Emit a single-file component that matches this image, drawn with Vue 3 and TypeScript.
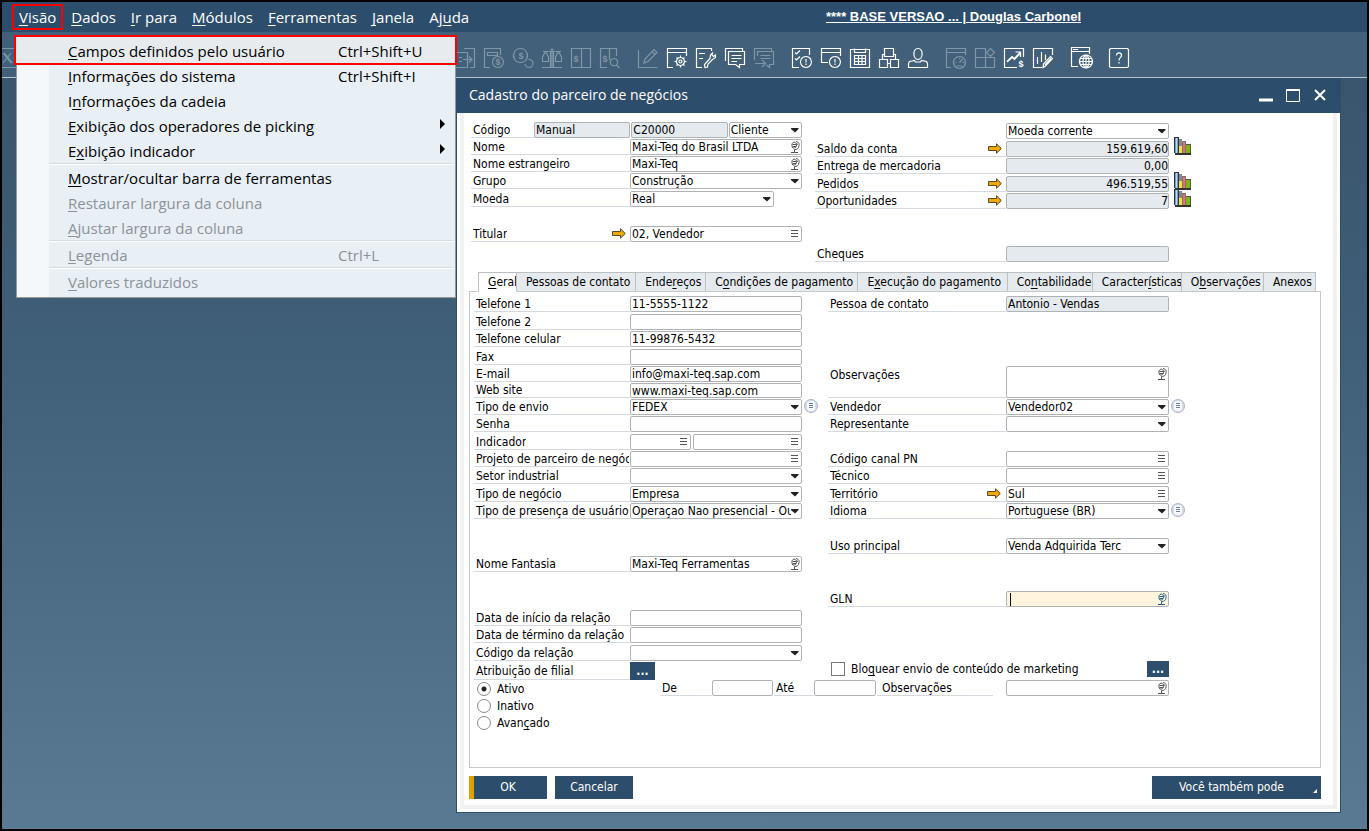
<script setup lang="ts">
import { h, ref } from 'vue'

interface MenuEntry { text: string; keys?: string; sub?: boolean; off?: boolean; hot?: boolean; line?: boolean }
interface Field { id: string; kind: 'text' | 'select' | 'note' | 'list' | 'area' | 'more'; value?: string; size?: string; locked?: boolean; num?: boolean; active?: boolean }
interface Row { label?: string; check?: string; fields: Field[]; link?: boolean; extra?: 'chart' | 'chip'; mods?: string }
interface Area { id: string; tabbed?: boolean; cols: Row[][] }
interface Tool { d: string; dim?: boolean; gap?: boolean; text?: string; tx?: number; ty?: number }

const Mnemonic = (props: { text: string }) => {
  const at = props.text.indexOf('_')
  if (at < 0) return h('span', props.text)
  return h('span', [props.text.slice(0, at), h('u', props.text[at + 1]), props.text.slice(at + 2)])
}
Mnemonic.props = ['text']

const globe = 'M3 1.500C4.500 .5 6.500 1.500 6.500 4C6.500 6.500 4.500 7.500 3 7C1.500 6 1.500 2.500 3 1.500ZM6 .5C9 1 9.500 3 9 5C8.500 7.500 7 8.500 4.500 8.500V11M1 11.500H8M2.500 3.500H6M2.500 5.500H6M6.500 2.500L8 3.500'

const menus = ['_Visão', '_Dados', '_Ir para', '_Módulos', '_Ferramentas', '_Janela', 'Aj_uda']

const entries: MenuEntry[] = [
  { text: '_Campos definidos pelo usuário', keys: 'Ctrl+Shift+U', hot: true },
  { text: '_Informações do sistema', keys: 'Ctrl+Shift+I' },
  { text: 'I_nformações da cadeia' },
  { text: '_Exibição dos operadores de picking', sub: true },
  { text: 'E_xibição indicador', sub: true },
  { text: '_Mostrar/ocultar barra de ferramentas', line: true },
  { text: '_Restaurar largura da coluna', off: true },
  { text: '_Ajustar largura da coluna', off: true },
  { text: '_Legenda', keys: 'Ctrl+L', off: true, line: true },
  { text: '_Valores traduzidos', off: true, line: true },
]

const tools: Tool[] = [
  { dim: true, d: 'M1 4.5H12.5V19.5H1M9 .5H19.5V19.5H15M4 9.500H7M4 13.500H7M8 11.500H17M14 8.500L17 11.500L14 14.500' },
  { dim: true, d: 'M6 19.500H.5V.5H16.500V7M3.500 4.500H13.500V7.500H3.500ZM14 8.500A5.500 5.500 0 1 1 13.900 8.500', text: '$', tx: 14, ty: 17 },
  { dim: true, d: 'M7.500 .5A7 7 0 1 1 7.400 .5M15.500 11.500A4 4 0 1 1 12 16', text: '$', tx: 8, ty: 11 },
  { dim: true, d: 'M1 3.500H19M10 .5V19.500M8.500 3.500V19.500M11.500 3.500V19.500M0 19.500H20M3.500 3.500L.5 9V13.500H6.500V9ZM16.500 3.500L13.500 9V13.500H19.500V9ZM8.500 1.500H11.500' },
  { dim: true, d: 'M.5 .5H19.500V19.500H.5ZM10.500 .5V19.500', text: '$', tx: 5, ty: 14 },
  { dim: true, d: 'M7 19.500H.5V.5H16.500V8M9.500 .5V12M14 10.500A3.700 3.700 0 1 1 13.900 10.500M16.500 17L19.500 20', text: '$', tx: 5, ty: 14 },
  { dim: true, gap: true, d: 'M.5 2V19.500H19.500M6 15L7 11L16 1.500L19 4.500L10 13.500ZM14 3.500L17 6.500' },
  { d: 'M6 19.500H.5V.5H19.500V8M.5 4.500H19.500M13.500 9.500V7.500M13.500 19.500V17.500M7.500 13.500H9.500M17.500 13.500H19.500M9.500 9.500L11 11M16 16L17.500 17.500M17.500 9.500L16 11M11 16L9.500 17.500M13.500 9.500A4 4 0 1 1 13.400 9.500M13.500 12A1.500 1.500 0 1 1 13.400 12' },
  { d: 'M6 19.500H.5V.5H15.500V3M3 5.500H9M3 10.500H7M17 4.500L14.500 7L14 10.500L8.500 16.500L9 19.500L11.500 19L12 16L16.500 11.500L19.500 9.500V7L17.500 8.500L16 7Z' },
  { d: 'M.5 13V.5H17.500V3M3.500 3.500H19.500V16.500H14.500V19.500L10.500 16.500H3.500ZM6.500 7.500H16.500M6.500 10.500H16.500M6.500 13.500H12' },
  { dim: true, d: 'M.5 12V.5H17.500V3M3.500 8V3.500H19.500V16.500H15.500V19.500L12.500 17M6.500 7.500H16.500M6.500 10.500H16.500M1 15.500H11M8 12L11.500 15.500L8 19' },
  { gap: true, d: 'M7 19.500H.5V.5H17.500V7M3 4.500L4.500 6L8 2.500M3 10.500L4.500 12L8 8.500M14 8.500A5.500 5.500 0 1 1 13.900 8.500M14 11V14.500M14 15.500V17' },
  { d: 'M7 14.500H.5V.5H19.500V8M.5 4.500H19.500M14 8.500A5.500 5.500 0 1 1 13.900 8.500M14 11V14.500M14 15.500V17' },
  { d: 'M.5 1.500H19.500V19.500H.5ZM4.500 .5V4.500H15.500V.5M4.500 7.500H15.500V16.500H4.500ZM4.500 10.500H15.500M4.500 13.500H15.500M8.500 7.500V16.500M12 7.500V16.500' },
  { d: 'M5.500 .5H14.500V8.500H5.500ZM3.500 11V6.500H5.500M16.500 11V6.500H14.500M.5 11.500H8.500V19.500H.5ZM11.500 11.500H19.500V19.500H11.500ZM8.500 15.500H11.500' },
  { d: 'M10 .5C16 .5 15 11.500 10 11.500C5 11.500 4 .5 10 .5M6.500 12.500L1.500 13.500L.5 15.500V19.500H19.500V15.500L18.500 13.500L13.500 12.500L12.500 14H7.500Z' },
  { dim: true, gap: true, d: 'M5 19.500H.5V.5H19.500V7M.5 4.500H19.500M13.500 8.500A6 6 0 1 1 13.400 8.500M13.500 14.500L16.500 11M9.500 14.500H10.500M16.500 14.500H18M13.500 10V11M10.500 18H16.500' },
  { dim: true, d: 'M.5 19.500V.5H10.500V19.500ZM.5 9.500H19.500V19.500H10.500M15.500 .5L19.500 4.500L15.500 8.500L11.500 4.500Z' },
  { d: 'M13 19.500H.5V.5H19.500V9M3 13.500L8 8.500L10.500 10.500L16 4.500M11.500 4H16.500V9M3 14L8 9.500L10.500 11.500L16.500 5', text: '$', tx: 17, ty: 19 },
  { d: 'M9 19.500H.5V.5H19.500V7M4.500 9V16M8.500 4V14M12.500 6.500V12M10 19.500L10.500 16L17.500 8.500L19.500 10.500L12.500 18ZM12 17L18 10.500' },
  { gap: true, d: 'M7 18.500H.5V-.5H18.500V6M.5 3.500H18.500M2 1.500H7M15 7A6.500 6.500 0 1 1 14.900 7M15 7C11 9 11 18 15 20C19 18 19 9 15 7M15 7V20M8.500 13.500H21.500M9.500 10.500H20.500M9.500 16.500H20.500' },
  { gap: true, d: 'M1.500 .5H18.500L19.500 1.500V18.500L18.500 19.500H1.500L.5 18.500V1.500ZM7.500 7.500C7.500 4 12.500 4 12.500 7.500C12.500 9.500 10 9.500 10 12.500M10 14V15.500' },
]

const tabs = ['_Geral', 'Pessoas de contato', 'Ende_reços', 'C_ondições de pagamento', 'E_xecução do pagamento', 'Co_ntabilidade', 'Caracter_ísticas', 'O_bservações', 'Anexos']

const areas: Area[] = [
  {
    id: 'summary',
    cols: [
      [
        { label: 'Código', mods: 'coded', fields: [
          { id: 'serie', kind: 'text', value: 'Manual', locked: true, size: 'wide' },
          { id: 'codigo', kind: 'text', value: 'C20000', locked: true, size: 'wide' },
          { id: 'tipo', kind: 'select', value: 'Cliente', size: 'mid' } ] },
        { label: 'Nome', fields: [{ id: 'nome', kind: 'note', value: 'Maxi-Teq do Brasil LTDA' }] },
        { label: 'Nome estrangeiro', fields: [{ id: 'estrangeiro', kind: 'note', value: 'Maxi-Teq' }] },
        { label: 'Grupo', mods: 'tall', fields: [{ id: 'grupo', kind: 'select', value: 'Construção' }] },
        { label: 'Moeda', mods: 'inset gap-s', fields: [{ id: 'moeda', kind: 'select', value: 'Real' }] },
        { label: 'Titular', link: true, fields: [{ id: 'titular', kind: 'list', value: '02, Vendedor' }] },
      ],
      [
        { mods: 'tall', fields: [{ id: 'corrente', kind: 'select', value: 'Moeda corrente' }] },
        { label: 'Saldo da conta', link: true, extra: 'chart', fields: [{ id: 'saldo', kind: 'text', value: '159.619,60', locked: true, num: true }] },
        { label: 'Entrega de mercadoria', mods: 'tall', fields: [{ id: 'entrega', kind: 'text', value: '0,00', locked: true, num: true }] },
        { label: 'Pedidos', link: true, extra: 'chart', fields: [{ id: 'pedidos', kind: 'text', value: '496.519,55', locked: true, num: true }] },
        { label: 'Oportunidades', link: true, extra: 'chart', mods: 'gap-m', fields: [{ id: 'oportunidades', kind: 'text', value: '7', locked: true, num: true }] },
        { label: 'Cheques', fields: [{ id: 'cheques', kind: 'text', locked: true }] },
      ],
    ],
  },
  {
    id: 'panel',
    tabbed: true,
    cols: [
      [
        { label: 'Telefone 1', mods: 'tall', fields: [{ id: 'tel1', kind: 'text', value: '11-5555-1122' }] },
        { label: 'Telefone 2', fields: [{ id: 'tel2', kind: 'text' }] },
        { label: 'Telefone celular', mods: 'tall', fields: [{ id: 'celular', kind: 'text', value: '11-99876-5432' }] },
        { label: 'Fax', fields: [{ id: 'fax', kind: 'text' }] },
        { label: 'E-mail', fields: [{ id: 'email', kind: 'text', value: 'info@maxi-teq.sap.com' }] },
        { label: 'Web site', mods: 'short', fields: [{ id: 'site', kind: 'text', value: 'www.maxi-teq.sap.com' }] },
        { label: 'Tipo de envio', extra: 'chip', fields: [{ id: 'envio', kind: 'select', value: 'FEDEX' }] },
        { label: 'Senha', mods: 'tall', fields: [{ id: 'senha', kind: 'text' }] },
        { label: 'Indicador', fields: [{ id: 'indicador', kind: 'list', size: 'third' }, { id: 'indicador2', kind: 'list' }] },
        { label: 'Projeto de parceiro de negócios', fields: [{ id: 'projeto', kind: 'list' }] },
        { label: 'Setor industrial', mods: 'tall', fields: [{ id: 'setor', kind: 'select' }] },
        { label: 'Tipo de negócio', fields: [{ id: 'negocio', kind: 'select', value: 'Empresa' }] },
        { label: 'Tipo de presença de usuário', mods: 'gap-m', fields: [{ id: 'presenca', kind: 'select', value: 'Operaçao Nao presencial - Outros' }] },
        { label: 'Nome Fantasia', mods: 'tall gap-m', fields: [{ id: 'fantasia', kind: 'note', value: 'Maxi-Teq Ferramentas' }] },
        { label: 'Data de início da relação', fields: [{ id: 'inicio', kind: 'text' }] },
        { label: 'Data de término da relação', mods: 'tall', fields: [{ id: 'termino', kind: 'text' }] },
        { label: 'Código da relação', fields: [{ id: 'relacao', kind: 'select' }] },
        { label: 'Atribuição de filial', mods: 'branch', fields: [{ id: 'filial', kind: 'more' }] },
      ],
      [
        { label: 'Pessoa de contato', mods: 'gap-l', fields: [{ id: 'pessoa', kind: 'text', value: 'Antonio - Vendas', locked: true }] },
        { label: 'Observações', mods: 'double', fields: [{ id: 'obs', kind: 'area' }] },
        { label: 'Vendedor', extra: 'chip', fields: [{ id: 'vendedor', kind: 'select', value: 'Vendedor02' }] },
        { label: 'Representante', mods: 'gap-s', fields: [{ id: 'representante', kind: 'select' }] },
        { label: 'Código canal PN', fields: [{ id: 'canal', kind: 'list' }] },
        { label: 'Técnico', mods: 'tall', fields: [{ id: 'tecnico', kind: 'list' }] },
        { label: 'Território', link: true, fields: [{ id: 'territorio', kind: 'list', value: 'Sul' }] },
        { label: 'Idioma', extra: 'chip', mods: 'gap-s', fields: [{ id: 'idioma', kind: 'select', value: 'Portuguese (BR)' }] },
        { label: 'Uso principal', mods: 'gap-m', fields: [{ id: 'uso', kind: 'select', value: 'Venda Adquirida Terc' }] },
        { label: 'GLN', mods: 'gap-l', fields: [{ id: 'gln', kind: 'note', active: true }] },
        { check: 'Blo_quear envio de conteúdo de marketing', fields: [{ id: 'marketing', kind: 'more' }] },
      ],
    ],
  },
]

const states = ['Ativo', 'Inativo', 'Avan_çado']
const state = ref('Ativo')
const tab = ref('_Geral')
</script>

<template>
  <div class="desktop">
    <header class="menubar">
      <nav class="menus">
        <button v-for="(m, i) in menus" :key="m" type="button" :class="{ marked: i === 0 }"><Mnemonic :text="m" /></button>
      </nav>
      <a class="account" href="#">**** BASE VERSAO ... | Douglas Carbonel</a>
    </header>

    <div class="toolbar">
      <div class="tool-start">
        <svg class="tool dim" viewBox="0 0 20 20"><path d="M.5 .5H19.500V19.500H.5ZM5 5L13 15M6.500 5L14.500 15M13 5L5 15" /></svg>
      </div>
      <button v-for="(t, i) in tools" :key="i" type="button" class="tool-button" :class="{ spaced: t.gap, dim: t.dim }" :aria-label="'Ferramenta ' + (i + 1)">
        <svg class="tool" viewBox="0 0 20 20">
          <path :d="t.d" />
          <text v-if="t.text" :x="t.tx" :y="t.ty">{{ t.text }}</text>
        </svg>
      </button>
    </div>

    <div class="menu" role="menu">
      <template v-for="e in entries" :key="e.text">
        <hr v-if="e.line">
        <button type="button" role="menuitem" :class="{ hot: e.hot }" :disabled="e.off">
          <Mnemonic class="caption" :text="e.text" />
          <span class="keys">{{ e.keys }}</span>
          <svg v-if="e.sub" viewBox="0 0 5 10" class="sub"><path d="M0 0L5 5L0 10Z" /></svg>
        </button>
      </template>
    </div>

    <main class="window">
      <div class="titlebar">
        <h1>Cadastro do parceiro de negócios</h1>
        <button type="button" aria-label="Minimizar"><svg viewBox="0 0 14 14"><path d="M0 12H14" stroke-width="3" /></svg></button>
        <button type="button" aria-label="Maximizar"><svg viewBox="0 0 14 14"><path d="M.5 2H13.500M.5 1V13.500H13.500V1" stroke-width="1" /><path d="M0 2H14" stroke-width="2" /></svg></button>
        <button type="button" aria-label="Fechar"><svg viewBox="0 0 14 14"><path d="M2 2L12 12M12 2L2 12" stroke-width="2" /></svg></button>
      </div>

      <form class="body" @submit.prevent>
        <template v-for="area in areas" :key="area.id">
          <div v-if="area.tabbed" class="tabs" role="tablist">
            <button v-for="t in tabs" :key="t" type="button" role="tab" :class="{ current: tab === t }" :aria-selected="tab === t" @click="tab = t"><Mnemonic :text="t" /></button>
          </div>
          <section :class="area.id">
            <div class="columns">
              <div v-for="(col, c) in area.cols" :key="c" class="column">
                <div v-for="row in col" :key="row.fields[0].id" class="row" :class="row.mods">
                  <label v-if="row.check" class="check"><input type="checkbox"><Mnemonic :text="row.check" /></label>
                  <label v-else-if="row.label" class="label" :for="row.fields[0].id">
                    <span>{{ row.label }}</span>
                    <svg v-if="row.link" class="link" viewBox="0 0 14 11"><path d="M.5 3.500H8.500V.8L13.300 5.500L8.500 10.200V7.500H.5Z" /></svg>
                  </label>
                  <span v-else class="blank"></span>
                  <div v-for="f in row.fields" :key="f.id" class="field" :class="[f.size, f.kind, { locked: f.locked, active: f.active }]">
                    <select v-if="f.kind === 'select'" :id="f.id" :aria-label="f.id"><option>{{ f.value }}</option></select>
                    <button v-else-if="f.kind === 'more'" :id="f.id" type="button" class="more">...</button>
                    <textarea v-else-if="f.kind === 'area'" :id="f.id"></textarea>
                    <input v-else :id="f.id" type="text" :aria-label="f.id" :value="f.value" :readonly="f.locked" :class="{ num: f.num }">
                    <svg v-if="f.kind === 'select'" class="glyph" viewBox="0 0 10 12"><path d="M1 4H8.500V5L5 8.500L1 5Z" fill="#222" /></svg>
                    <svg v-if="f.kind === 'list'" class="glyph" viewBox="0 0 10 12"><path d="M1 3.500H8M1 6.500H8M1 9.500H8" transform="translate(0 -1)" stroke="#555" stroke-width="1.2" /></svg>
                    <svg v-if="f.kind === 'note' || f.kind === 'area'" class="glyph globe" viewBox="0 0 10 12"><path :d="globe" /></svg>
                    <span v-if="f.active" class="caret"></span>
                  </div>
                  <svg v-if="row.extra === 'chart'" class="chart" viewBox="0 0 17 18">
                    <path d="M0 0H5V16H17V18H1V16H0Z" fill="#333" /><path d="M1 1H4V16H1Z" fill="#6f9fd0" /><path d="M2 1H3V16H2Z" fill="#b9dcf5" />
                    <path d="M5 2H8V9H5Z" fill="#888" /><path d="M5 9H8V16H5Z" fill="#f0e04a" /><path d="M8 4H12V16H8Z" fill="#777" /><path d="M9 5H11V16H9Z" fill="#f06a6a" />
                    <path d="M12 7H17V16H12Z" fill="#555" /><path d="M12 8H16V16H12Z" fill="#7db50e" />
                  </svg>
                  <svg v-if="row.extra === 'chip'" class="chip" viewBox="0 0 14 14"><circle cx="7" cy="7" r="6.500" fill="#d3dcec" stroke="#aab4cc" /><rect x="3" y="2" width="8" height="10" rx="3" fill="#f6f9fd" /><path d="M5 4.500H9M5 6.500H9M5 8.500H9" stroke="#777f90" /></svg>
                </div>
              </div>
            </div>
            <div v-if="area.tabbed" class="status">
              <div class="states">
                <label v-for="s in states" :key="s"><input v-model="state" type="radio" name="estado" :value="s"><Mnemonic :text="s" /></label>
              </div>
              <label class="label" for="de">De</label>
              <div class="field"><input id="de" type="text"></div>
              <label class="label until" for="ate">Até</label>
              <div class="field"><input id="ate" type="text"></div>
              <label class="label remark" for="obs-estado">Observações</label>
              <div class="field note"><input id="obs-estado" type="text"><svg class="glyph globe" viewBox="0 0 10 12"><path :d="globe" /></svg></div>
            </div>
          </section>
        </template>

        <footer class="actions">
          <button type="submit" class="primary">OK</button>
          <button type="button">Cancelar</button>
          <button type="button" class="also">Você também pode<svg viewBox="0 0 4 4"><path d="M4 0V4H0Z" /></svg></button>
        </footer>
      </form>
    </main>
  </div>
</template>

<style>
body { margin: 0; }
</style>

<style scoped>
* { box-sizing: border-box; }
button, input, select, textarea { font: inherit; color: inherit; margin: 0; padding: 0; border: 0; background: none; border-radius: 0; outline: none; }
button { white-space: nowrap; }
:deep(u) { text-underline-offset: 2px; text-decoration-thickness: 1px; text-decoration-skip-ink: none; }

.desktop {
  position: relative; height: 100vh; min-height: 831px; overflow: hidden;
  border: 2px solid #000;
  background: linear-gradient(#3a556e 10%, #416079 45%, #5a7a94);
  font-family: "DejaVu Sans Condensed", "DejaVu Sans", sans-serif; font-size: 12px; line-height: 14px; color: #000;
}

.menubar { display: flex; align-items: center; height: 30px; background: #2c4d6b; color: #fff; font-family: "Open Sans", sans-serif; font-size: 15px; line-height: 20px; }
.menus { display: flex; flex: 0 0 824px; padding-left: 10px; gap: 1px; }
.menus button { height: 26px; padding: 0 5px; border: 2px solid transparent; }
.menus .marked { border-color: #f00; }
.account { color: #fff; font: bold 13px/16px "Liberation Sans", sans-serif; white-space: nowrap; }

.toolbar { display: flex; align-items: center; gap: 9px; height: 46px; background: #426079; padding-top: 6px; border-bottom: 1px solid #b7c3cd; }
.tool-start { flex: 0 0 444px; height: 20px; }
.tool-button { flex: 0 0 20px; height: 20px; color: #fff; }
.tool-button.spaced { margin-left: 9px; }
.tool { display: block; width: 20px; height: 20px; overflow: visible; fill: none; stroke: currentColor; stroke-width: 1.2; color: #fff; }
.tool-start .tool { margin-left: -4px; }
.tool text { font: bold 9px "Liberation Sans", sans-serif; fill: currentColor; stroke: none; text-anchor: middle; }
.dim, .dim .tool, .tool.dim { color: #7f96a8; }

.menu {
  position: absolute; left: 14px; top: 34px; width: 440px; z-index: 2; padding: 2px 2px 3px;
  border: 1px solid #999; background: linear-gradient(90deg, #f4f8fb 32px, #e8eff5 32px);
  font-family: "Open Sans", sans-serif; font-size: 15px; line-height: 20px;
}
.menu button { display: flex; align-items: center; width: 100%; height: 25px; padding-left: 49px; text-align: left; }
.menu button:disabled { color: #8d9299; }
.menu .caption { flex: 0 0 270px; }
.menu .keys { flex: 1; }
.menu .sub { width: 5px; height: 10px; margin: 0 8px 4px 0; }
.menu hr { height: 2px; margin: 0 0 0 30px; border: 0; border-top: 1px solid #d2dbe3; background: #fff; }
.menu .hot { width: 443px; height: 30px; margin: -4px 0 -2px -5px; padding: 2px 0 0 52px; border: 2px solid #f00; background: #e7ebee; }

.window { position: absolute; left: 454px; right: 26px; top: 76px; bottom: 16px; display: flex; flex-direction: column; border: 1px solid #2c4d6b; background: #fff; }
.titlebar { display: flex; align-items: center; gap: 13px; height: 34px; flex: none; padding: 0 13px 2px 12px; background: #2c4d6b; color: #fff; }
.titlebar h1 { flex: 1; margin: 0; font: 400 14px/20px "Open Sans", sans-serif; }
.titlebar svg { display: block; width: 14px; height: 14px; fill: none; stroke: #fff; }

.body { flex: 1; display: flex; flex-direction: column; margin: 0 3px 3px; padding: 9px 12px 6px 5px; border: 4px solid #f1f1f1; border-top: 0; }
.columns { display: grid; }
.summary { padding-left: 2px; height: 150px; }
.summary .columns { grid-template-columns: 331fr 354fr 139fr; column-gap: 13px; }
.summary .column:nth-child(2) { padding-top: 1px; }
.panel .columns { grid-template-columns: 328fr 341fr 125fr; column-gap: 26px; }

.row { position: relative; display: flex; height: 16px; margin-bottom: 1px; }
.row.tall { margin-bottom: 2px; }
.row.short { height: 15px; }
.row.double { height: 32px; }
.row.gap-s { margin-bottom: 19px; }
.row.gap-m { margin-bottom: 37px; }
.row.tall.gap-m { margin-bottom: 38px; }
.row.gap-l { margin-bottom: 54px; }
.row.inset { padding-right: 28px; }
.row.branch { height: 18px; margin-bottom: 0; }

.label { display: flex; align-items: center; min-width: 0; padding-left: 2px; border-bottom: 1px solid #d3d9de; white-space: nowrap; overflow: hidden; }
.label > span { overflow: hidden; }
.label .link { flex: none; width: 14px; height: 11px; margin: 0 4px 0 auto; fill: #f0a800; stroke: #55492e; }
.summary .label, .summary .blank { flex: 0 0 159px; }
.summary .column:nth-child(2) .label, .summary .column:nth-child(2) .blank { flex-basis: 191px; }
.panel .row .label { flex: 0 0 156px; padding-right: 1px; }
.panel .column:nth-child(2) .row .label { flex-basis: 178px; }
.summary .row.coded .label { flex-basis: 63px; }
.row.double .label { align-items: flex-start; padding-top: 2px; }

.field { position: relative; flex: 1 1 0; min-width: 0; display: flex; }
.field.wide { flex: 96 1 0; padding-right: 1px; }
.field.mid { flex: 73 1 0; }
.field.third { flex: 0 0 61px; margin-right: 2px; }
.field input, .field select, .field textarea { flex: 1; width: 100%; min-width: 0; height: 100%; padding: 0 2px 0 1px; border: 1px solid #b0b3b6; border-radius: 2px; background: #fff; appearance: none; resize: none; line-height: 14px; }
.field.note input, .field.list input { padding-right: 12px; }
.field select { padding-right: 10px; text-overflow: clip; }
.field.locked input { background: #e5eaee; }
.field.active input { background: #fff4dc; }
.field .num { text-align: right; padding-right: 0; }
.glyph { position: absolute; right: 2px; top: 2px; width: 10px; height: 12px; fill: none; }
.globe { stroke: #555; }
.active .globe { stroke: #2d6187; }
.caret { position: absolute; left: 4px; top: 2px; width: 1px; height: 13px; background: #000; }
.field.more { justify-content: flex-start; }
.more .more { width: 25px; height: 18px; background: #2c4d6b; color: #fff; font-weight: bold; }
.check + .field.more { flex: 0 0 22px; }
.check + .field .more { width: 22px; height: 16px; }
.check { flex: 1; display: flex; align-items: center; gap: 6px; padding-left: 3px; }
.check input { appearance: none; width: 14px; height: 14px; border: 1px solid #777; background: #fff; }
.chart { position: absolute; left: 100%; top: -4px; width: 17px; height: 18px; margin-left: 5px; }
.chip { position: absolute; left: 100%; top: 0; width: 14px; height: 14px; margin-left: 2px; }

.tabs { display: grid; grid-template-columns: 39fr 119fr 70fr 152fr 149fr 85fr 89fr 82fr 52fr; height: 20px; flex: none; margin: 0 5px -1px 9px; }
.tabs button { min-width: 0; padding-left: 9px; overflow: hidden; text-align: left; background: #e5eaee; border: 1px solid #bbbfc2; border-left: 0; }
.tabs .current { position: relative; background: #fff; border-left: 1px solid #bbbfc2; border-bottom-color: #fff; }
.panel { flex: 1; border: 1px solid #c6c8ca; padding: 4px 0 0 4px; }

.status { display: grid; grid-template-columns: 186fr 52fr 61fr 41fr 62fr 130fr 163fr 151fr; grid-auto-rows: 16px; }
.status .until { margin-left: 1px; }
.status .remark { margin: 0 13px 0 1px; padding-left: 5px; }
.states label { display: flex; align-items: center; height: 17px; gap: 6px; padding-left: 3px; }
.states input { appearance: none; width: 14px; height: 14px; border: 1px solid #888; border-radius: 50%; background: #fff; }
.states input:checked { background: radial-gradient(circle, #222 2px, #fff 3px); }

.actions { display: flex; flex: none; gap: 8px; margin-top: 8px; }
.actions button { position: relative; width: 78px; height: 23px; padding-bottom: 2px; background: #2c4d6b; color: #fff; }
.actions .primary { border-left: 5px solid #e0a000; padding-right: 5px; }
.actions .also { width: 169px; margin-left: auto; padding-right: 10px; }
.also svg { position: absolute; right: 4px; bottom: 6px; width: 4px; height: 4px; fill: #fff; }
</style>
